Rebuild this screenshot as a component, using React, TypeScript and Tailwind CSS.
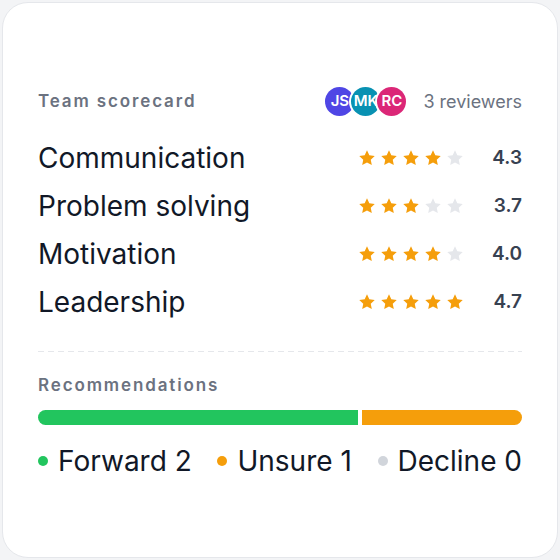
const skills = [
  { name: 'Communication', stars: 4, score: '4.3' },
  { name: 'Problem solving', stars: 3, score: '3.7' },
  { name: 'Motivation', stars: 4, score: '4.0' },
  { name: 'Leadership', stars: 5, score: '4.7' },
];

const reviewers = [
  { initials: 'JS', bg: 'bg-[#4f46e5]' },
  { initials: 'MK', bg: 'bg-[#0891b2]' },
  { initials: 'RC', bg: 'bg-[#db2777]' },
];

function Star({ filled }: { filled: boolean }) {
  return (
    <svg viewBox="0 0 24 24" className={`w-[18px] h-[18px] ${filled ? 'text-[#f59e0b]' : 'text-[#e5e7eb]'}`}>
      <path
        fill="currentColor"
        d="M12 1.8l3.1 6.6 7.2.9-5.3 5 1.4 7.1L12 17.9l-6.4 3.5 1.4-7.1-5.3-5 7.2-.9z"
      />
    </svg>
  );
}

export default function App() {
  return (
    <div className="w-[560px] h-[560px] bg-[#f3f4f6] p-[2px]" style={{ fontFamily: 'Inter, "Noto Sans", sans-serif' }}>
      <div className="h-full rounded-[26px] border border-[#e5e7eb] bg-white px-[35px] pt-[84px] flex flex-col">
        <div className="flex items-center justify-between h-[29px]">
          <span className="text-[17px] font-semibold tracking-[0.11em] text-[#6b7280]">Team scorecard</span>
          <div className="flex items-center gap-[17px]">
            <div className="flex -space-x-[3px]">
              {reviewers.map((r) => (
                <div
                  key={r.initials}
                  className={`w-[29px] h-[29px] rounded-full ring-2 ring-white ${r.bg} flex items-center justify-center text-[15px] font-semibold text-white`}
                >
                  {r.initials}
                </div>
              ))}
            </div>
            <span className="text-[18px] text-[#6b7280]">3 reviewers</span>
          </div>
        </div>

        <div className="mt-[24px] flex flex-col gap-3">
          {skills.map((s) => (
            <div key={s.name} className="flex items-center h-9">
              <span className="flex-1 text-[28px] text-[#111827]">{s.name}</span>
              <div className="flex gap-1">
                {[0, 1, 2, 3, 4].map((i) => (
                  <Star key={i} filled={i < s.stars} />
                ))}
              </div>
              <span className="ml-6 w-[34px] text-right text-[19px] font-semibold text-[#374151]">{s.score}</span>
            </div>
          ))}
        </div>

        <div className="mt-[31px] h-px bg-[repeating-linear-gradient(90deg,#e5e7eb_0_6px,transparent_6px_10px)]" />

        <span className="mt-[21px] text-[17px] leading-6 font-semibold tracking-[0.11em] text-[#6b7280]">Recommendations</span>

        <div className="mt-[13px] flex gap-1 h-[15px] rounded-full overflow-hidden">
          <div className="flex-[2] bg-[#22c55e]" />
          <div className="flex-[1] bg-[#f59e0b]" />
        </div>

        <div className="mt-[19px] flex items-center justify-between text-[28px] leading-[34px] text-[#111827]">
          <div className="flex items-center gap-[10px]">
            <span className="w-[10px] h-[10px] rounded-full bg-[#22c55e]" />
            Forward 2
          </div>
          <div className="flex items-center gap-[10px]">
            <span className="w-[10px] h-[10px] rounded-full bg-[#f59e0b]" />
            Unsure 1
          </div>
          <div className="flex items-center gap-[10px]">
            <span className="w-[10px] h-[10px] rounded-full bg-[#d1d5db]" />
            Decline 0
          </div>
        </div>
      </div>
    </div>
  );
}
